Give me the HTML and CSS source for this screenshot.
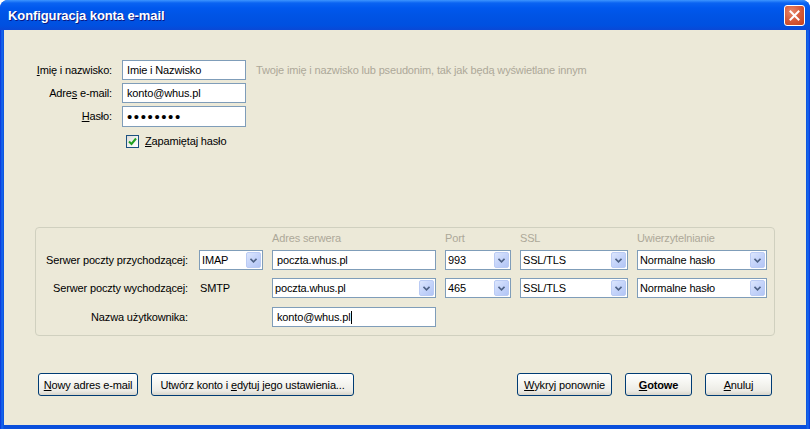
FILE: index.html
```html
<!DOCTYPE html>
<html lang="pl">
<head>
    <meta charset="UTF-8">
    <title>Konfiguracja konta e-mail</title>
    <link rel="stylesheet" href="styles.css">
</head>
<body>
    <div class="window">
        <div class="titlebar">
            <span class="title">Konfiguracja konta e-mail</span>
            <span class="close-btn">
                <svg width="11" height="11" viewBox="0 0 11 11"><path d="M1.5 1.5 L9.5 9.5 M9.5 1.5 L1.5 9.5" stroke="#fff" stroke-width="2" stroke-linecap="square"/></svg>
            </span>
        </div>

        <div class="client">
            <div class="identity">
                <label for="name"><u>I</u>mię i nazwisko:</label>
                <input type="text" id="name" value="Imie i Nazwisko">
                <span class="hint">Twoje imię i nazwisko lub pseudonim, tak jak będą wyświetlane innym</span>

                <label for="email">Adre<u>s</u> e-mail:</label>
                <input type="text" id="email" value="konto@whus.pl">
                <span></span>

                <label for="pass"><u>H</u>asło:</label>
                <input type="password" id="pass" value="12345678" class="pass">
                <span></span>
            </div>

            <div class="remember">
                <span class="checkbox">
                    <svg width="11" height="11" viewBox="0 0 11 11"><path d="M2 5.5 L4.5 8 L9 2.5" fill="none" stroke="#21a121" stroke-width="2"/></svg>
                </span>
                <span><u>Z</u>apamiętaj hasło</span>
            </div>

            <!-- ustawienia serwerów -->
            <div class="servers">
                <span></span>
                <span></span>
                <span class="col-head">Adres serwera</span>
                <span class="col-head">Port</span>
                <span class="col-head">SSL</span>
                <span class="col-head">Uwierzytelnianie</span>

                <span class="row-label">Serwer poczty przychodzącej:</span>
                <div class="combo"><span>IMAP</span><span class="combo-btn"><svg width="7" height="5" viewBox="0 0 7 5"><path d="M0.5 0.8 L3.5 3.8 L6.5 0.8" fill="none" stroke="#4d6185" stroke-width="1.6"/></svg></span></div>
                <input type="text" value="poczta.whus.pl">
                <div class="combo"><span>993</span><span class="combo-btn"><svg width="7" height="5" viewBox="0 0 7 5"><path d="M0.5 0.8 L3.5 3.8 L6.5 0.8" fill="none" stroke="#4d6185" stroke-width="1.6"/></svg></span></div>
                <div class="combo"><span>SSL/TLS</span><span class="combo-btn"><svg width="7" height="5" viewBox="0 0 7 5"><path d="M0.5 0.8 L3.5 3.8 L6.5 0.8" fill="none" stroke="#4d6185" stroke-width="1.6"/></svg></span></div>
                <div class="combo"><span>Normalne hasło</span><span class="combo-btn"><svg width="7" height="5" viewBox="0 0 7 5"><path d="M0.5 0.8 L3.5 3.8 L6.5 0.8" fill="none" stroke="#4d6185" stroke-width="1.6"/></svg></span></div>

                <span class="row-label">Serwer poczty wychodzącej:</span>
                <span class="plain">SMTP</span>
                <div class="combo"><span>poczta.whus.pl</span><span class="combo-btn"><svg width="7" height="5" viewBox="0 0 7 5"><path d="M0.5 0.8 L3.5 3.8 L6.5 0.8" fill="none" stroke="#4d6185" stroke-width="1.6"/></svg></span></div>
                <div class="combo"><span>465</span><span class="combo-btn"><svg width="7" height="5" viewBox="0 0 7 5"><path d="M0.5 0.8 L3.5 3.8 L6.5 0.8" fill="none" stroke="#4d6185" stroke-width="1.6"/></svg></span></div>
                <div class="combo"><span>SSL/TLS</span><span class="combo-btn"><svg width="7" height="5" viewBox="0 0 7 5"><path d="M0.5 0.8 L3.5 3.8 L6.5 0.8" fill="none" stroke="#4d6185" stroke-width="1.6"/></svg></span></div>
                <div class="combo"><span>Normalne hasło</span><span class="combo-btn"><svg width="7" height="5" viewBox="0 0 7 5"><path d="M0.5 0.8 L3.5 3.8 L6.5 0.8" fill="none" stroke="#4d6185" stroke-width="1.6"/></svg></span></div>

                <span class="row-label">Nazwa użytkownika:</span>
                <span></span>
                <div class="textbox">konto@whus.pl<span class="caret"></span></div>
            </div>

            <div class="actions">
                <div class="btn-group">
                    <button class="btn w-new"><u>N</u>owy adres e-mail</button>
                    <button class="btn w-create">Utwórz konto i <u>e</u>dytuj jego ustawienia...</button>
                </div>
                <div class="btn-group">
                    <button class="btn w-detect"><u>W</u>ykryj ponownie</button>
                    <button class="btn w-small default"><u>G</u>otowe</button>
                    <button class="btn w-small"><u>A</u>nuluj</button>
                </div>
            </div>
        </div>
    </div>
</body>
</html>
```

FILE: styles.css
```css
* { margin: 0; padding: 0; box-sizing: border-box; }
body {
    background: #ffffff;
    font-family: 'Liberation Sans', Arial, sans-serif;
    font-size: 11px;
    letter-spacing: -0.15px;
    color: #000;
}
u { text-decoration: underline; text-underline-offset: 1px; }

.window {
    width: 810px;
    height: 429px;
    display: flex;
    flex-direction: column;
    background: linear-gradient(90deg, #0831d9 0, #166aee 2px, #0a4fdc 4px, #0a4fdc 806px, #166aee 808px, #0831d9 810px);
    border-radius: 8px 8px 0 0;
    overflow: hidden;
}
.titlebar {
    height: 30px;
    flex: none;
    display: flex;
    align-items: center;
    justify-content: space-between;
    padding: 0 5px 0 8px;
    background: linear-gradient(#3d95ff 0, #0a63f2 3px, #0058ee 8px, #0054e5 50%, #0050e0 85%, #0a48d6 100%);
}
.title {
    color: #fff;
    font-weight: bold;
    font-size: 13px;
    letter-spacing: -0.1px;
    text-shadow: 1px 1px 0 #0a1883;
}
.close-btn {
    width: 21px;
    height: 21px;
    display: flex;
    align-items: center;
    justify-content: center;
    border: 1px solid #fff;
    border-radius: 3px;
    background: radial-gradient(circle at 35% 30%, #e8886a 0, #d55a3a 50%, #c2401c 100%);
}

.client {
    flex: 1;
    margin: 0 4px 4px;
    background: #ece9d8;
    padding-top: 30px;
}

input, .textbox {
    font: inherit;
    letter-spacing: inherit;
    height: 20px;
    border: 1px solid #7f9db9;
    background: #fff;
    padding: 0 4px;
    color: #000;
    outline: none;
}

.identity {
    display: grid;
    grid-template-columns: 108px 124px auto;
    grid-template-rows: 20px 20px 21px;
    column-gap: 10px;
    row-gap: 3px;
}
.identity label {
    text-align: right;
    line-height: 20px;
}
.identity input { width: 124px; height: 100%; }
.identity input.pass { font-size: 15px; letter-spacing: 1.6px; }
.hint {
    color: #aca899;
    line-height: 20px;
    white-space: nowrap;
}

.remember {
    display: flex;
    align-items: center;
    gap: 6px;
    margin: 7px 0 0 122px;
    height: 14px;
}
.checkbox {
    width: 13px;
    height: 13px;
    border: 1px solid #1c5180;
    background: linear-gradient(135deg, #dcdcd7 0, #f8f8f6 70%, #fff 100%);
    display: flex;
    align-items: center;
    justify-content: center;
}

.servers {
    margin: 79px 31px 0;
    border: 1px solid #d0d0bf;
    border-radius: 4px;
    padding: 0 7px 8px 8px;
    display: grid;
    grid-template-columns: 146px 64px 164px 66px 108px 130px;
    grid-template-rows: 22px 28px 29px 20px;
    column-gap: 9px;
    align-items: start;
}
.col-head {
    color: #aca899;
    padding-top: 3px;
    line-height: 14px;
}
.row-label {
    text-align: right;
    line-height: 20px;
    padding-right: 2px;
    white-space: nowrap;
}
.plain { line-height: 20px; padding-left: 1px; }
.servers input, .textbox { width: 100%; }
.textbox { display: flex; align-items: center; }
.caret {
    width: 1px;
    height: 13px;
    background: #000;
    margin-left: 1px;
}

.combo {
    height: 20px;
    border: 1px solid #7f9db9;
    background: #fff;
    display: flex;
    align-items: center;
    justify-content: space-between;
    padding: 1px 1px 1px 2px;
    white-space: nowrap;
}
.combo-btn {
    width: 15px;
    height: 16px;
    display: flex;
    align-items: center;
    justify-content: center;
    border: 1px solid #bacbf4;
    border-radius: 2px;
    background: linear-gradient(135deg, #dce6fd 0, #c5d4fa 50%, #b2c5f5 100%);
}

.actions {
    margin-top: 37px;
    padding: 0 34px;
    display: flex;
    justify-content: space-between;
}
.btn-group { display: flex; gap: 13px; }
.btn {
    font: inherit;
    letter-spacing: inherit;
    height: 23px;
    border: 1px solid #003c74;
    border-radius: 3px;
    background: linear-gradient(#ffffff 0, #f6f6f2 40%, #ecebe5 80%, #d8d5cb 100%);
    color: #000;
    white-space: nowrap;
}
.btn.default { font-weight: bold; }
.w-new { width: 100px; }
.w-create { width: 203px; }
.w-detect { width: 95px; }
.w-small { width: 67px; }
```
